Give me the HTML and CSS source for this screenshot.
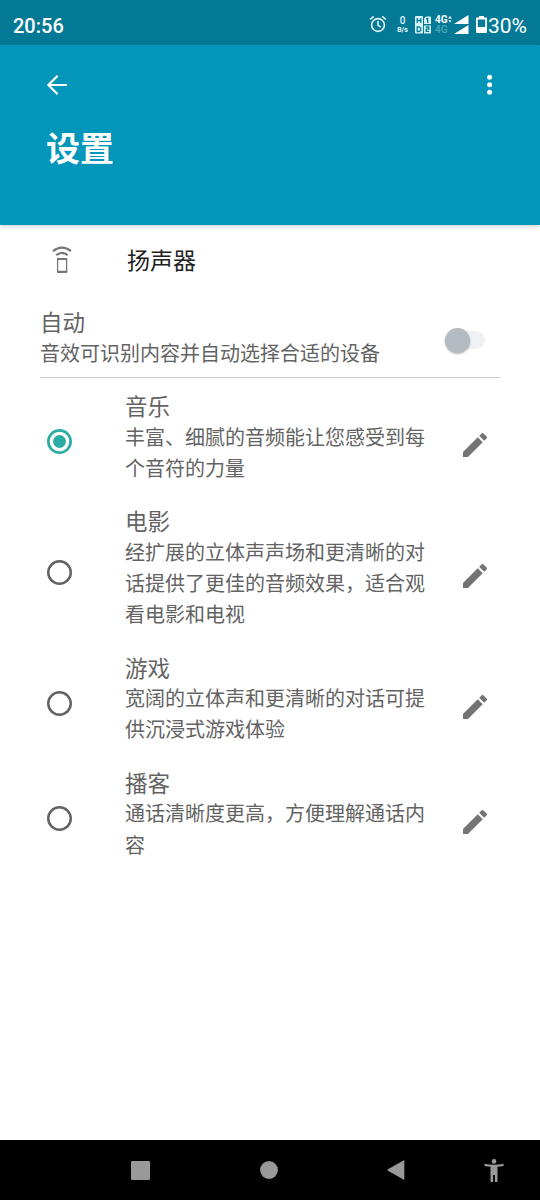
FILE: index.html
```html
<!DOCTYPE html>
<html lang="zh-CN">
<head>
<meta charset="utf-8">
<title>设置</title>
<link rel="stylesheet" href="styles.css">
</head>
<body>
<div class="screen">
  <div class="status">
    <span class="clock">20:56</span>
    <div class="indicators">
      <svg class="alarm" width="18" height="18" viewBox="0 0 18 18" fill="none" stroke="#e3f7fb" stroke-width="1.6"><circle cx="9" cy="10" r="6.4"/><path d="M9 6v4.3l2.8 1.9M1.2 4.3 4.7 1.4M16.8 4.3l-3.5-2.9"/></svg>
      <div class="speed"><span class="rate">0</span><span class="unit">B/s</span></div>
      <svg class="hd" width="16" height="18" viewBox="0 0 16 18"><rect width="8" height="17.5" rx="1" fill="#d9f2f7"/><path d="M9 2.5 11 .5h4a1 1 0 0 1 1 1V8H9zM9 9.5h7v7a1 1 0 0 1-1 1H9z" fill="#d9f2f7"/><path d="M2.2 2v5M5.8 2v5M2.2 4.5h3.6M2.2 11v4.5h2l1.6-1v-2.5l-1.6-1zM11 3.2l1.7-.8V7M10.8 11h3v2.2h-2.6v2.1h3" fill="none" stroke="#047c98" stroke-width="1.3"/></svg>
      <div class="network"><span class="net on">4G<svg width="4" height="8" viewBox="0 0 4 8" fill="#fff"><path d="M2 0 4 2.6H0zM2 6.4.5 4.2h3z"/></svg></span><span class="net off">4G</span></div>
      <svg class="signal" width="15" height="20" viewBox="0 0 15 20" fill="#fff"><path d="M14.5 0v9H0zM14.5 10v9H0z"/></svg>
      <svg class="battery" width="11" height="17" viewBox="0 0 11 17"><path fill="#fff" fill-rule="evenodd" d="M3 0h5v1.6h2a1 1 0 0 1 1 1V16a1 1 0 0 1-1 1H1a1 1 0 0 1-1-1V2.600a1 1 0 0 1 1-1h2zM1.800 3.400V11h7.400V3.400z"/></svg>
      <span class="percent">30%</span>
    </div>
  </div>
  <header class="header">
    <div class="toolbar">
      <svg width="22" height="22" viewBox="0 0 22 22" fill="none" stroke="#fff" stroke-width="2.2"><path d="M21 11H3M11.600 1.800 2.400 11l9.200 9.200"/></svg>
      <svg width="6" height="22" viewBox="0 0 6 22" fill="#fff"><circle cx="2.600" cy="3.300" r="2.500"/><circle cx="2.600" cy="10.800" r="2.500"/><circle cx="2.600" cy="18.300" r="2.500"/></svg>
    </div>
    <h1 class="title">设置</h1>
  </header>
  <main class="content">
    <div class="device">
      <svg width="20" height="28" viewBox="0 0 20 28" fill="none" stroke="#777"><path d="M1 5.200Q10-1.800 19 5.200" stroke-width="2.200"/><path d="M4.300 9.100q5.700-4.600 11.400 0" stroke-width="2.200"/><rect x="5.600" y="12.700" width="9" height="13.600" rx=".8" stroke-width="1.300"/><path d="M5 13h10.200M5 25.800h10.200" stroke-width="2"/></svg>
      <span class="device-name">扬声器</span>
    </div>
    <div class="auto">
      <div class="auto-text">
        <div class="name">自动</div>
        <div class="desc">音效可识别内容并自动选择合适的设备</div>
      </div>
      <div class="switch"><div class="thumb"></div></div>
    </div>
    <div class="options">
      <div class="option"><span class="radio checked"></span><div class="body"><div class="name">音乐</div><div class="desc">丰富、细腻的音频能让您感受到每<br>个音符的力量</div></div><svg class="pencil" width="24" height="24" viewBox="3 3 18 18"><path d="M3 17.250V21h3.750L17.810 9.940l-3.750-3.750zM20.710 7.040a1 1 0 0 0 0-1.410l-2.340-2.340a1 1 0 0 0-1.410 0l-1.830 1.830 3.750 3.750z"/></svg></div>
      <div class="option"><span class="radio"></span><div class="body"><div class="name">电影</div><div class="desc">经扩展的立体声声场和更清晰的对<br>话提供了更佳的音频效果，适合观<br>看电影和电视</div></div><svg class="pencil" width="24" height="24" viewBox="3 3 18 18"><path d="M3 17.250V21h3.750L17.810 9.940l-3.750-3.750zM20.710 7.040a1 1 0 0 0 0-1.410l-2.340-2.340a1 1 0 0 0-1.410 0l-1.830 1.830 3.750 3.750z"/></svg></div>
      <div class="option"><span class="radio"></span><div class="body"><div class="name">游戏</div><div class="desc">宽阔的立体声和更清晰的对话可提<br>供沉浸式游戏体验</div></div><svg class="pencil" width="24" height="24" viewBox="3 3 18 18"><path d="M3 17.250V21h3.750L17.810 9.940l-3.750-3.750zM20.710 7.040a1 1 0 0 0 0-1.410l-2.340-2.340a1 1 0 0 0-1.410 0l-1.830 1.830 3.750 3.750z"/></svg></div>
      <div class="option"><span class="radio"></span><div class="body"><div class="name">播客</div><div class="desc">通话清晰度更高，方便理解通话内<br>容</div></div><svg class="pencil" width="24" height="24" viewBox="3 3 18 18"><path d="M3 17.250V21h3.750L17.810 9.940l-3.750-3.750zM20.710 7.040a1 1 0 0 0 0-1.410l-2.340-2.340a1 1 0 0 0-1.410 0l-1.830 1.830 3.750 3.750z"/></svg></div>
    </div>
  </main>
  <nav class="navbar">
    <svg width="19" height="19" viewBox="0 0 19 19"><rect width="19" height="19" rx="1.200"/></svg>
    <svg width="18" height="18" viewBox="0 0 18 18"><circle cx="9" cy="9" r="8.900"/></svg>
    <svg width="18" height="20" viewBox="0 0 18 20"><path d="M17.300 0v20L.5 10.600v-1.200z"/></svg>
    <svg width="20" height="23" viewBox="0 0 20 23"><circle cx="10" cy="2.400" r="2.300"/><path d="M.5 4.700Q10 6.700 19.500 4.700V7q-3 .7-6 .8V23h-2.600v-7H9.100v7H6.500V7.800Q3.500 7.700.5 7z"/></svg>
  </nav>
</div>
</body>
</html>
```
FILE: styles.css
```css
* { box-sizing: border-box; }
body { margin: 0; font-family: "Noto Sans CJK SC", sans-serif; background: #fff; }
svg { display: block; flex: none; }
.screen { width: 540px; height: 1200px; display: flex; flex-direction: column; overflow: hidden; }
.status { height: 45px; flex: none; background: #047996; color: #fff; display: flex; justify-content: space-between; padding: 0 13px; font-family: Roboto, sans-serif; }
.clock { font-size: 20px; font-weight: 500; line-height: 52px; }
.indicators { display: flex; align-items: flex-start; }
.alarm { margin: 15px 9px 0 0; }
.speed { width: 13px; margin: 15px 6px 0 0; display: flex; flex-direction: column; align-items: center; color: #e3f7fb; }
.rate { font-size: 10px; line-height: 12px; font-weight: 500; }
.unit { font-size: 7px; line-height: 7px; font-weight: 700; }
.hd { margin: 16px 4px 0 0; }
.network { width: 18px; margin-top: 15px; display: flex; flex-direction: column; }
.net { display: flex; align-items: center; font-size: 10px; line-height: 10px; font-weight: 700; }
.off { color: #4ba5b9; font-weight: 500; }
.signal { margin: 15px 7px 0 1px; }
.battery { margin: 16px 1px 0 0; }
.percent { font-size: 21px; font-weight: 400; line-height: 52px; }
.header { height: 180px; flex: none; background: #0396bb; color: #fff; padding: 29px 47px 0 46px; box-shadow: 0 1px 4px rgba(0,90,110,.3); }
.toolbar { display: flex; justify-content: space-between; }
.title { margin: 24px 0 0; font-size: 34px; font-weight: 700; line-height: 54px; }
.content { flex: 1; padding: 0 40px; color: #636363; }
.device { height: 70px; display: flex; align-items: center; gap: 55px; padding-left: 12px; }
.device-name { font-size: 23px; color: #212121; margin-top: -2px; }
.auto { height: 83px; border-bottom: 1px solid #c9cbcb; display: flex; justify-content: space-between; padding-top: 11px; }
.auto .desc { padding-top: 1px; }
.name { font-size: 22.500px; line-height: 30px; }
.desc { font-size: 20px; line-height: 31.300px; white-space: nowrap; }
.switch { width: 38px; height: 18px; margin: 25px 15px 0 0; border-radius: 9px; background: #eff1f2; }
.thumb { width: 25px; height: 25px; margin: -3px 0 0 -12px; border-radius: 50%; background: #b2bcc1; box-shadow: 0 1px 2px rgba(0,0,0,.3); transform: translateX(10px); }
.options { padding-top: 6px; }
.option { display: flex; align-items: center; padding: 0 13px 0 7px; }
.radio { width: 25px; height: 25px; flex: none; box-shadow: inset 0 0 0 2.500px #636363; border-radius: 50%; display: grid; place-items: center; }
.checked { box-shadow: inset 0 0 0 2.700px #2aaca7; }
.checked::after { content: ""; width: 13px; height: 13px; border-radius: 50%; background: #2aaca7; }
.body { width: 338px; padding: 6px 0 16.100px 53px; }
.body .desc { padding-top: .5px; }
.pencil { margin: 7px 0 0 auto; fill: #747474; }
.navbar { height: 60px; flex: none; background: #000; fill: #999; display: flex; align-items: center; justify-content: space-between; padding: 0 36px 0 131px; }
.navbar svg:last-child { margin-left: -31px; }
```
